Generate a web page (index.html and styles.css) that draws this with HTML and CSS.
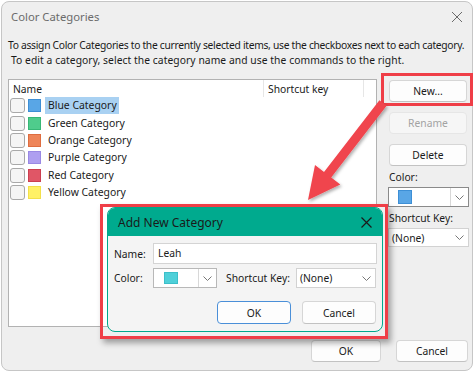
FILE: index.html
```html
<!DOCTYPE html>
<html>
<head>
    <title>Color Categories</title>
    <link rel="stylesheet" href="styles.css">
</head>
<body>
    <div class="window">
        <div class="titlebar">
            <span class="title">Color Categories</span>
            <svg class="close" width="12" height="12" viewBox="0 0 12 12"><path d="M1 1L11 11M11 1L1 11" stroke="#6b6b6b" stroke-width="1"/></svg>
        </div>
        <div class="intro">
            <div class="first">To assign Color Categories to the currently selected items, use the checkboxes next to each category.</div>
            <div class="indent">To edit a category, select the category name and use the commands to the right.</div>
        </div>
        <div class="main">
            <div class="list">
                <div class="list-head">
                    <span class="col-name">Name</span>
                    <span class="col-key">Shortcut key</span>
                    <span class="col-rest"></span>
                </div>
                <div class="row"><span class="check"></span><span class="swatch blue"></span><span class="label selected">Blue Category</span></div>
                <div class="row"><span class="check"></span><span class="swatch green"></span><span class="label">Green Category</span></div>
                <div class="row"><span class="check"></span><span class="swatch orange"></span><span class="label">Orange Category</span></div>
                <div class="row"><span class="check"></span><span class="swatch purple"></span><span class="label">Purple Category</span></div>
                <div class="row"><span class="check"></span><span class="swatch red"></span><span class="label">Red Category</span></div>
                <div class="row"><span class="check"></span><span class="swatch yellow"></span><span class="label">Yellow Category</span></div>
            </div>
            <div class="side">
                <button class="btn btn-new">New...</button>
                <button class="btn btn-rename" disabled>Rename</button>
                <button class="btn btn-delete">Delete</button>
                <div class="side-label">Color:</div>
                <div class="combo combo-color">
                    <span class="combo-value"><span class="swatch blue"></span></span>
                    <span class="combo-arrow boxed"><svg width="9" height="5" viewBox="0 0 9 5"><path d="M0.5 0.5L4.5 4.5L8.5 0.5" fill="none" stroke="#777" stroke-width="1"/></svg></span>
                </div>
                <div class="side-label key-label">Shortcut Key:</div>
                <div class="combo combo-key">
                    <span class="combo-value">(None)</span>
                    <span class="combo-arrow"><svg width="9" height="5" viewBox="0 0 9 5"><path d="M0.5 0.5L4.5 4.5L8.5 0.5" fill="none" stroke="#777" stroke-width="1"/></svg></span>
                </div>
            </div>
        </div>
        <div class="footer">
            <button class="btn btn-ok">OK</button>
            <button class="btn btn-cancel">Cancel</button>
        </div>
    </div>

    <!-- callout overlays -->
    <div class="mark mark-new"></div>

    <svg class="arrow" width="475" height="373" viewBox="0 0 475 373">
        <defs>
            <filter id="shade" x="-20%" y="-20%" width="140%" height="140%">
                <feDropShadow dx="1.5" dy="2" stdDeviation="1.5" flood-color="#000" flood-opacity="0.3"/>
            </filter>
        </defs>
        <polygon points="379.4,100.2 386.6,105.8 331.2,177.5 340.3,184.5 308,200 315,164.9 324,171.9" fill="#f0454d" filter="url(#shade)"/>
    </svg>

    <div class="mark mark-dialog"></div>

    <div class="dialog">
        <div class="dialog-title">
            <span>Add New Category</span>
            <svg width="11" height="11" viewBox="0 0 11 11"><path d="M0.5 0.5L10.5 10.5M10.5 0.5L0.5 10.5" stroke="#1a1a1a" stroke-width="1.2"/></svg>
        </div>
        <div class="dialog-body">
            <div class="field">
                <span class="field-label">Name:</span>
                <div class="textbox">Leah</div>
            </div>
            <div class="field">
                <span class="field-label">Color:</span>
                <div class="combo combo-small">
                    <span class="combo-value"><span class="swatch cyan"></span></span>
                    <span class="combo-arrow boxed"><svg width="9" height="5" viewBox="0 0 9 5"><path d="M0.5 0.5L4.5 4.5L8.5 0.5" fill="none" stroke="#777" stroke-width="1"/></svg></span>
                </div>
                <span class="field-label key">Shortcut Key:</span>
                <div class="combo combo-none">
                    <span class="combo-value">(None)</span>
                    <span class="combo-arrow"><svg width="9" height="5" viewBox="0 0 9 5"><path d="M0.5 0.5L4.5 4.5L8.5 0.5" fill="none" stroke="#777" stroke-width="1"/></svg></span>
                </div>
            </div>
            <div class="dialog-buttons">
                <button class="btn btn-default">OK</button>
                <button class="btn">Cancel</button>
            </div>
        </div>
    </div>
</body>
</html>
```

FILE: styles.css
```css
body {
    margin: 0;
    position: relative;
    width: 475px;
    height: 373px;
    overflow: hidden;
    background-color: white;
    font-family: "Noto Sans", "Open Sans", sans-serif;
    font-size: 10.3px;
    color: #1a1a1a;
    white-space: nowrap;
}

/* --- main window --- */
.window {
    margin: 1px;
    width: 472px;
    height: 370px;
    box-sizing: border-box;
    border: 1px solid #c6c6c6;
    border-radius: 8px;
    background-color: #efefef;
    display: flex;
    flex-direction: column;
}

.titlebar {
    height: 29px;
    padding: 0 9px 0 9px;
    display: flex;
    align-items: center;
    justify-content: space-between;
}

.title {
    font-size: 11.3px;
    color: #6b6b6b;
}

.intro {
    margin-top: 7px;
    padding-left: 6px;
    line-height: 15px;
}

.first {
    letter-spacing: -0.3px;
}

.indent {
    padding-left: 3px;
    letter-spacing: 0.06px;
}

.main {
    display: flex;
    gap: 12px;
    margin-top: 11px;
    padding-left: 6px;
}

.list {
    width: 369px;
    height: 248px;
    box-sizing: border-box;
    border: 1px solid #b2b2b2;
    background-color: white;
}

.list-head {
    display: flex;
    height: 17px;
    line-height: 18px;
}

.col-name {
    width: 250px;
    padding-left: 4px;
    border-right: 1px solid #e6e6e6;
}

.col-key {
    width: 95px;
    padding-left: 4px;
    border-right: 1px solid #e6e6e6;
}

.row {
    height: 17.4px;
    display: flex;
    align-items: center;
    padding-left: 1px;
}

.check {
    width: 15px;
    height: 15px;
    box-sizing: border-box;
    border: 1px solid #a9a9a9;
    border-radius: 3px;
    background-color: #f5f5f5;
}

.swatch {
    display: inline-block;
    width: 13px;
    height: 13px;
    box-sizing: border-box;
    margin-left: 3px;
}

.blue { background-color: #59a6e6; border: 1px solid #3d8fd6; }
.green { background-color: #4fcc8c; border: 1px solid #37b776; }
.orange { background-color: #ee8559; border: 1px solid #de6d40; }
.purple { background-color: #ae9ff0; border: 1px solid #9a89e4; }
.red { background-color: #e05666; border: 1px solid #cc3f50; }
.yellow { background-color: #fff166; border: 1px solid #f3e04a; }
.cyan { background-color: #4fd0d9; border: 1px solid #3cbfc9; }

.label {
    margin-left: 4px;
    padding: 0 2px 0 3px;
    line-height: 17px;
    font-size: 10.4px;
}

.selected {
    background-color: #a9d1f2;
}

/* --- right column --- */
.side {
    width: 78px;
    display: flex;
    flex-direction: column;
}

.btn {
    font-family: inherit;
    font-size: 10.3px;
    color: #1a1a1a;
    background-color: #fdfdfd;
    border: 1px solid #d6d6d6;
    border-bottom-color: #c2c2c2;
    border-radius: 4px;
    padding: 0;
    height: 22px;
}

.btn-new {
    margin-top: 1px;
}

.btn-rename {
    margin-top: 10px;
    color: #a3a3a3;
    background-color: #f6f6f6;
    border-color: #e6e6e6;
}

.btn-delete {
    margin-top: 10px;
}

.side-label {
    margin-top: 4px;
    line-height: 15px;
}

.key-label {
    margin-top: 4px;
}

.combo {
    display: flex;
    align-items: stretch;
    height: 20px;
    box-sizing: border-box;
    background-color: white;
    border: 1px solid #d2d2d2;
    margin-top: 2px;
}

.combo-color {
    border-color: #8a8a8a;
    margin-left: -1px;
    width: 81px;
}

.combo-key {
    margin-left: -1px;
    width: 81px;
    height: 19px;
}

.combo-value {
    flex: 1;
    display: flex;
    align-items: center;
    padding-left: 3px;
}

.combo-color .combo-value .swatch {
    width: 14px;
    height: 14px;
    margin-left: 6px;
}

.combo-arrow {
    width: 17px;
    display: flex;
    align-items: center;
    justify-content: center;
}

.combo-arrow.boxed {
    border-left: 1px solid #d8d8d8;
}

/* --- footer --- */
.footer {
    margin-top: 13px;
    display: flex;
    justify-content: flex-end;
    gap: 15px;
    padding-right: 4px;
}

.btn-ok {
    width: 70px;
}

.btn-cancel {
    width: 72px;
}

/* --- callouts --- */
.mark {
    position: absolute;
    box-sizing: border-box;
    border: 3px solid #ef3e47;
}

.mark-new {
    left: 381px;
    top: 73px;
    width: 92px;
    height: 33px;
}

.mark-dialog {
    left: 100px;
    top: 204px;
    width: 288px;
    height: 135px;
    box-shadow: 3px 4px 6px rgba(0, 0, 0, 0.35);
}

.arrow {
    position: absolute;
    left: 0;
    top: 0;
}

/* --- Add New Category dialog --- */
.dialog {
    position: absolute;
    left: 107px;
    top: 207px;
    width: 276px;
    height: 125px;
    box-sizing: border-box;
    border: 1px solid #00a88c;
    border-radius: 8px;
    background-color: #f4f4f4;
    overflow: hidden;
}

.dialog-title {
    height: 28px;
    background-color: #00aa8e;
    display: flex;
    align-items: center;
    justify-content: space-between;
    padding: 1px 10px 0 10px;
    box-sizing: border-box;
    font-size: 12px;
    color: #1a1a1a;
}

.dialog-body {
    padding: 7px 5px 0 6px;
}

.field {
    display: flex;
    align-items: center;
    margin-bottom: 4px;
}

.field-label {
    width: 39px;
}

.field-label.key {
    width: auto;
    margin-left: 9px;
    margin-right: 6px;
}

.textbox {
    flex: 1;
    height: 21px;
    box-sizing: border-box;
    border: 1px solid #d4d4d4;
    background-color: white;
    line-height: 19px;
    padding-left: 4px;
}

.combo-small {
    width: 64px;
    margin-top: 0;
    border-color: #b8b8b8;
}

.combo-small .swatch {
    width: 14px;
    height: 12px;
    margin-left: 7px;
}

.combo-none {
    width: 80px;
    margin-top: 0;
}

.dialog-buttons {
    margin-top: 13px;
    display: flex;
    justify-content: flex-end;
    gap: 11px;
    padding-right: 1px;
}

.dialog-buttons .btn {
    width: 74px;
    height: 23px;
}

.btn-default {
    border: 1px solid #4a8fd8;
}
```
